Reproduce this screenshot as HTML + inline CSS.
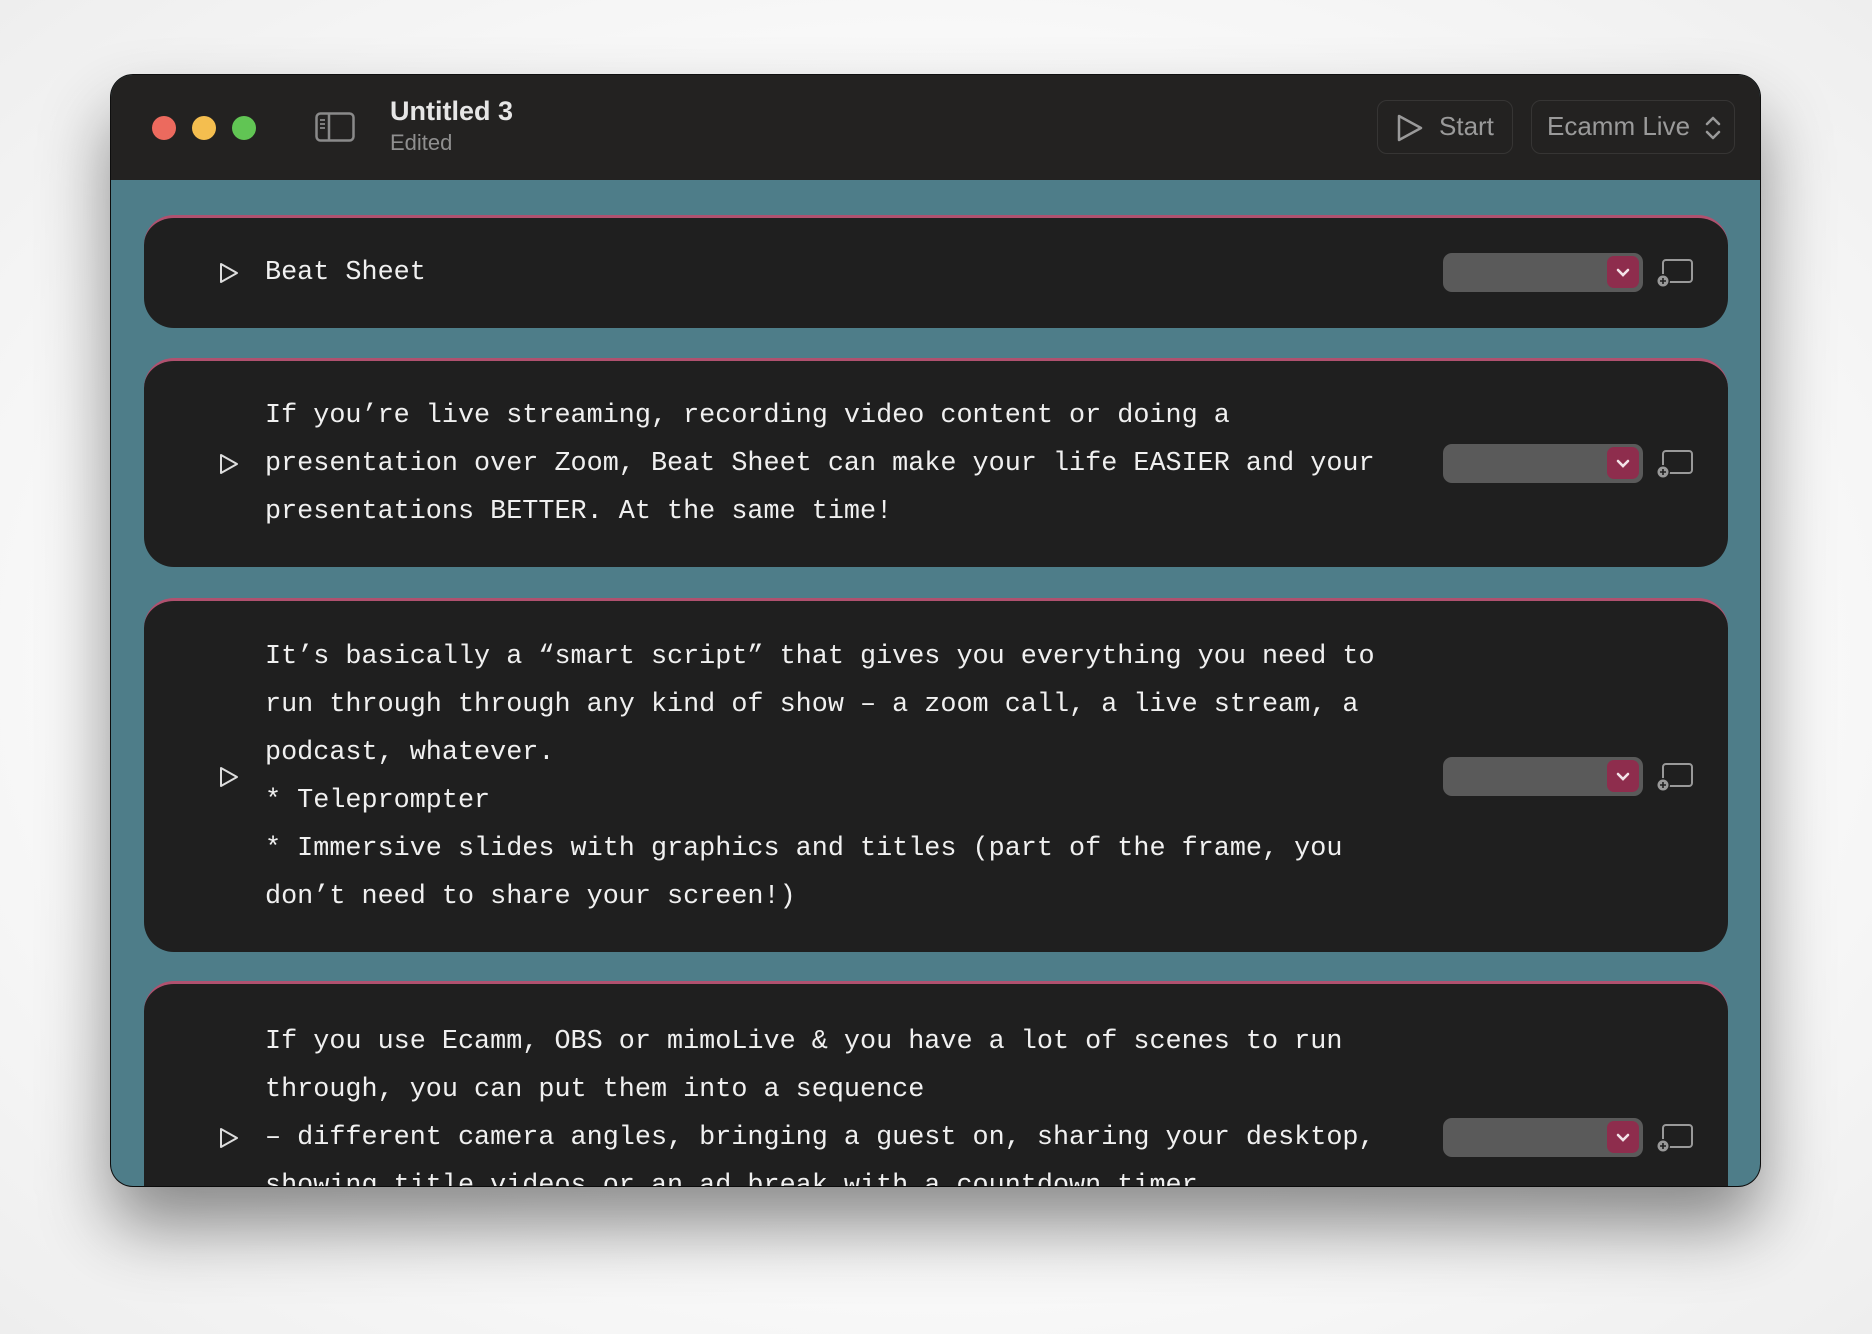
<!DOCTYPE html>
<html><head><meta charset="utf-8"><style>
*{margin:0;padding:0;box-sizing:border-box}
html,body{width:1872px;height:1334px;overflow:hidden;background:#f4f4f4}
body{position:relative;font-family:"Liberation Sans",sans-serif;background:radial-gradient(ellipse at 50% 50%,#fafafa 60%,#eeeeee 100%)}
.win{position:absolute;left:111px;top:75px;width:1649px;height:1111px;border-radius:22px;overflow:hidden;background:#4e7d89;box-shadow:0 40px 70px rgba(0,0,0,.45),0 0 0 1px #111;}
.tb{position:absolute;left:0;top:0;right:0;height:105px;background:#232221}
.tl{position:absolute;top:41px;width:24px;height:24px;border-radius:50%}
.title{position:absolute;left:279px;top:21px;color:#e6e6e6;font-weight:bold;font-size:27px}
.sub{position:absolute;left:279px;top:55px;color:#8f8f8f;font-size:22px}
.btn{position:absolute;top:25px;height:54px;border:1.5px solid #363534;border-radius:10px;color:#9a9a9a;font-size:26px;line-height:51px}
.card{position:absolute;left:33px;width:1584px;background:#1f1f1f;border-radius:30px;border-top:3px solid #b0516f}
.txt{position:absolute;left:121px;font-family:"Liberation Mono",monospace;font-size:26.8px;line-height:48px;color:#f0f0f0;white-space:pre;top:50%;transform:translateY(-50%)}
.play{position:absolute;left:74px;top:50%;margin-top:-11px}
.dd{position:absolute;left:1299px;top:50%;margin-top:-20px;width:200px;height:39px;background:#5a5a5a;border-radius:9px}
.dd i{position:absolute;right:4px;top:3px;width:32px;height:32px;background:#8e2d4d;border-radius:7px}
.cast{position:absolute;left:1512px;top:50%;margin-top:-16px}
</style></head><body>
<div class="win">
 <div class="tb">
  <div class="tl" style="left:41px;background:#ec6a5e"></div>
  <div class="tl" style="left:81px;background:#f4be4f"></div>
  <div class="tl" style="left:121px;background:#61c554"></div>
  <svg style="position:absolute;left:204px;top:37px" width="40" height="30" viewBox="0 0 40 30"><rect x="1.5" y="1.5" width="37" height="27" rx="4" fill="none" stroke="#8a8a8a" stroke-width="2.5"/><line x1="14" y1="2" x2="14" y2="28" stroke="#8a8a8a" stroke-width="2.5"/><path d="M5 8h5M5 12h5M5 16h5" stroke="#8a8a8a" stroke-width="1.8"/></svg>
  <div class="title">Untitled 3</div>
  <div class="sub">Edited</div>
  <div class="btn" style="left:1266px;width:136px"><svg style="position:absolute;left:18px;top:13px" width="28" height="28" viewBox="0 0 28 28"><path d="M3 2L25 14L3 26Z" fill="none" stroke="#9a9a9a" stroke-width="2.5" stroke-linejoin="round"/></svg><span style="position:absolute;left:61px">Start</span></div>
  <div class="btn" style="left:1420px;width:204px"><span style="position:absolute;left:15px">Ecamm Live</span><svg style="position:absolute;left:172px;top:13px" width="18" height="28" viewBox="0 0 18 28"><path d="M3 10L9 4L15 10M3 18L9 24L15 18" fill="none" stroke="#9a9a9a" stroke-width="2.5" stroke-linecap="round" stroke-linejoin="round"/></svg></div>
 </div>
 <div class="card" style="top:140px;height:113px">
  <svg class="play" width="22" height="22" viewBox="0 0 22 22"><path d="M3 2L19 11L3 20Z" fill="none" stroke="#ddd" stroke-width="2" stroke-linejoin="round"/></svg>
  <div class="txt">Beat Sheet</div>
  <div class="dd"><i></i><svg style="position:absolute;right:12px;top:14px" width="16" height="12" viewBox="0 0 16 12"><path d="M3 3L8 8L13 3" fill="none" stroke="#f3e3e8" stroke-width="2.6" stroke-linecap="round"/></svg></div>
  <svg class="cast" width="40" height="32" viewBox="0 0 40 32"><rect x="7" y="3" width="29" height="22" rx="3" fill="none" stroke="#999" stroke-width="2"/><circle cx="7" cy="24" r="7" fill="#1f1f1f"/><circle cx="7" cy="24" r="5.5" fill="#999"/><path d="M4 24h6M7 21v6" stroke="#1f1f1f" stroke-width="1.6"/></svg>
 </div>
 <div class="card" style="top:283px;height:209px">
  <svg class="play" width="22" height="22" viewBox="0 0 22 22"><path d="M3 2L19 11L3 20Z" fill="none" stroke="#ddd" stroke-width="2" stroke-linejoin="round"/></svg>
  <div class="txt">If you’re live streaming, recording video content or doing a
presentation over Zoom, Beat Sheet can make your life EASIER and your
presentations BETTER. At the same time!</div>
  <div class="dd"><i></i><svg style="position:absolute;right:12px;top:14px" width="16" height="12" viewBox="0 0 16 12"><path d="M3 3L8 8L13 3" fill="none" stroke="#f3e3e8" stroke-width="2.6" stroke-linecap="round"/></svg></div>
  <svg class="cast" width="40" height="32" viewBox="0 0 40 32"><rect x="7" y="3" width="29" height="22" rx="3" fill="none" stroke="#999" stroke-width="2"/><circle cx="7" cy="24" r="7" fill="#1f1f1f"/><circle cx="7" cy="24" r="5.5" fill="#999"/><path d="M4 24h6M7 21v6" stroke="#1f1f1f" stroke-width="1.6"/></svg>
 </div>
 <div class="card" style="top:523px;height:354px">
  <svg class="play" width="22" height="22" viewBox="0 0 22 22"><path d="M3 2L19 11L3 20Z" fill="none" stroke="#ddd" stroke-width="2" stroke-linejoin="round"/></svg>
  <div class="txt">It’s basically a “smart script” that gives you everything you need to
run through through any kind of show – a zoom call, a live stream, a
podcast, whatever.
* Teleprompter
* Immersive slides with graphics and titles (part of the frame, you
don’t need to share your screen!)</div>
  <div class="dd"><i></i><svg style="position:absolute;right:12px;top:14px" width="16" height="12" viewBox="0 0 16 12"><path d="M3 3L8 8L13 3" fill="none" stroke="#f3e3e8" stroke-width="2.6" stroke-linecap="round"/></svg></div>
  <svg class="cast" width="40" height="32" viewBox="0 0 40 32"><rect x="7" y="3" width="29" height="22" rx="3" fill="none" stroke="#999" stroke-width="2"/><circle cx="7" cy="24" r="7" fill="#1f1f1f"/><circle cx="7" cy="24" r="5.5" fill="#999"/><path d="M4 24h6M7 21v6" stroke="#1f1f1f" stroke-width="1.6"/></svg>
 </div>
 <div class="card" style="top:906px;height:250px">
  <svg class="play" style="top:154px;margin-top:-11px" width="22" height="22" viewBox="0 0 22 22"><path d="M3 2L19 11L3 20Z" fill="none" stroke="#ddd" stroke-width="2" stroke-linejoin="round"/></svg>
  <div class="txt" style="top:34px;transform:none">If you use Ecamm, OBS or mimoLive &amp; you have a lot of scenes to run
through, you can put them into a sequence
– different camera angles, bringing a guest on, sharing your desktop,
showing title videos or an ad break with a countdown timer</div>
  <div class="dd" style="top:154px"><i></i><svg style="position:absolute;right:12px;top:14px" width="16" height="12" viewBox="0 0 16 12"><path d="M3 3L8 8L13 3" fill="none" stroke="#f3e3e8" stroke-width="2.6" stroke-linecap="round"/></svg></div>
  <svg class="cast" style="top:154px" width="40" height="32" viewBox="0 0 40 32"><rect x="7" y="3" width="29" height="22" rx="3" fill="none" stroke="#999" stroke-width="2"/><circle cx="7" cy="24" r="7" fill="#1f1f1f"/><circle cx="7" cy="24" r="5.5" fill="#999"/><path d="M4 24h6M7 21v6" stroke="#1f1f1f" stroke-width="1.6"/></svg>
 </div>
</div>
</body></html>
